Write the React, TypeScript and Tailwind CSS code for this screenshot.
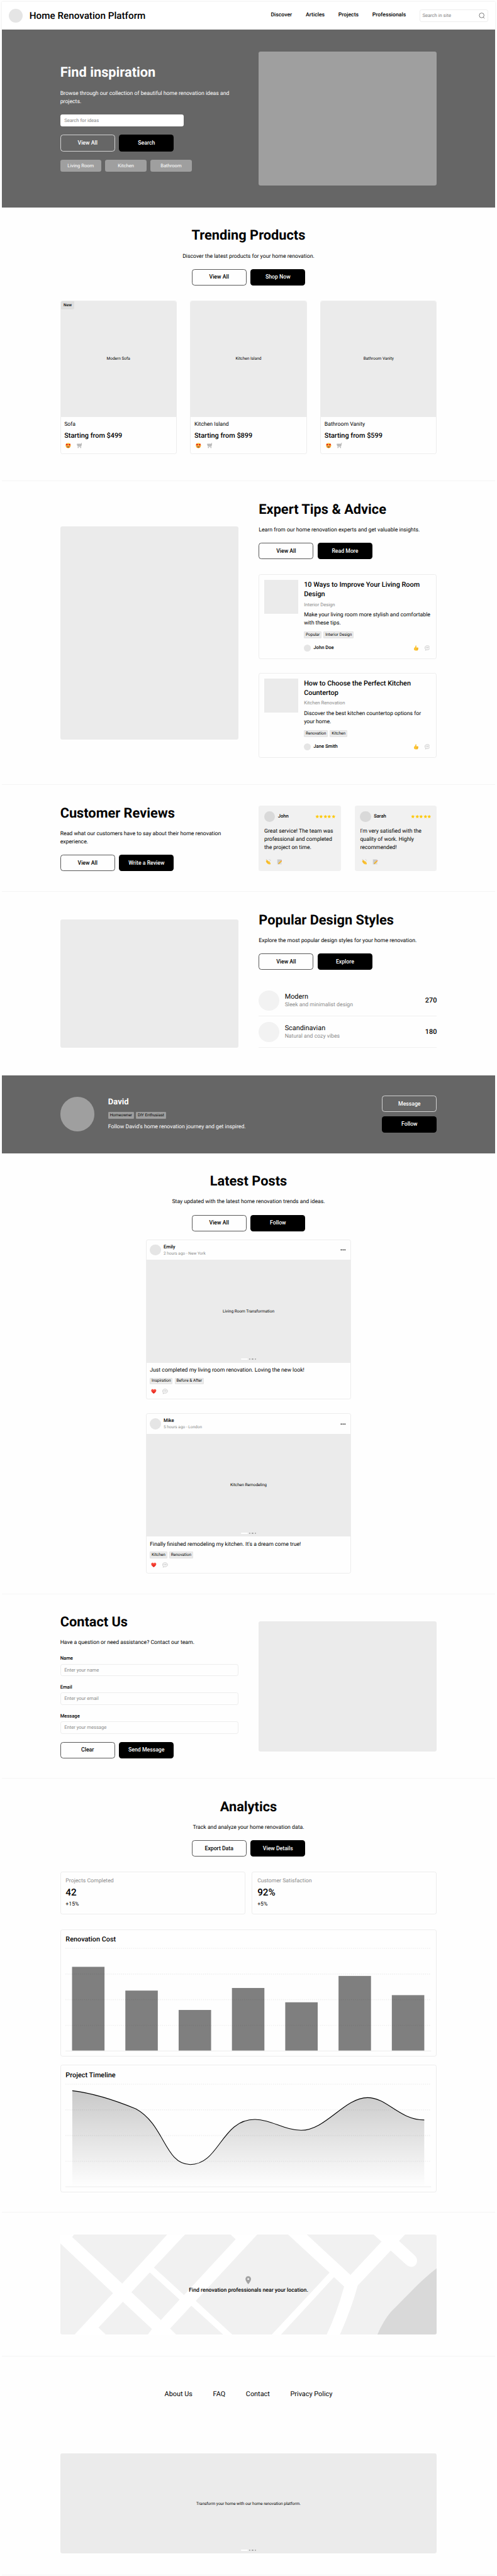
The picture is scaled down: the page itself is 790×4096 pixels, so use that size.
import type { ReactNode } from "react";

const t12 = "text-[6.53px] leading-4";
const t14 = "text-[7.62px] leading-5";
const t16 = "text-[8.71px] leading-6";
const t20 = "text-[10.88px] leading-7";

function Heart() {
  return (
    <svg viewBox="0 0 16 16" className="size-4">
      <defs>
        <linearGradient id="heart" x1="0" y1="0" x2="0" y2="1">
          <stop offset="0" stopColor="#ff5a4d" />
          <stop offset="1" stopColor="#e0190f" />
        </linearGradient>
      </defs>
      <path
        d="M8 14.8C3.5 11.8.6 9 .6 5.6.6 3.2 2.3 1.5 4.4 1.5 6 1.5 7.300 2.400 8 3.900 8.700 2.400 10 1.500 11.600 1.500c2.100 0 3.800 1.700 3.800 4.100 0 3.400-2.900 6.200-7.400 9.200Z"
        fill="url(#heart)"
      />
    </svg>
  );
}

function HeartEyes() {
  return (
    <svg viewBox="0 0 16 16" className="size-4">
      <defs>
        <linearGradient id="face" x1="0" y1="0" x2="0" y2="1">
          <stop offset="0" stopColor="#ffdf4f" />
          <stop offset="1" stopColor="#f0921c" />
        </linearGradient>
      </defs>
      <circle cx="8" cy="8" r="7.6" fill="url(#face)" />
      <path d="M4.400 9.800h7.200c0 2.400-1.400 3.800-3.600 3.800s-3.600-1.400-3.600-3.800Z" fill="#8a4a10" />
      <path d="M5 9.900h6v1.200H5z" fill="#fff" />
      <path d="M4 8.200C2 6.900 1 5.600 1.300 4.200c.4-1.500 2.400-1.700 3-.3 1-1 2.800-.4 2.800 1.200 0 1.300-1.200 2.300-3.100 3.100Z" fill="#e8231a" />
      <path d="M12 8.200c2-1.300 3-2.600 2.700-4-.4-1.500-2.400-1.700-3-.3-1-1-2.800-.4-2.800 1.200 0 1.300 1.200 2.300 3.100 3.100Z" fill="#e8231a" />
    </svg>
  );
}

function Cart() {
  return (
    <svg viewBox="0 0 16 16" className="size-4" fill="none" stroke="#8d8d8d">
      <path d="M15.600 1h-1.500L12 11.500H2.800" strokeWidth="1" />
      <path d="M1 3.500h12.300l-1 6H2.400z" fill="#e3e3e3" strokeWidth=".8" />
      <path d="M1.500 5.500h11.600M2 7.500h10.800M4 3.500l.8 6M7 3.500v6M10 3.500l-.4 6" strokeWidth=".6" />
      <circle cx="4" cy="14.200" r="1.100" fill="#555" stroke="none" />
      <circle cx="11.500" cy="14.200" r="1.100" fill="#555" stroke="none" />
    </svg>
  );
}

function Thumb() {
  return (
    <svg viewBox="0 0 16 16" className="size-4">
      <path
        d="M6.800.6c1.500-.5 2.300.7 2.200 2.300L8.700 6.500h4.200c2 0 2.200 2 1.200 2.600.9.700.6 2-.2 2.300.5.800.1 1.900-.7 2.100.2 1.100-.6 1.900-1.700 1.900H6.600c-2.800 0-4.900-1.500-4.900-4.300 0-2.500 1.500-3.600 2.700-4.900C5.700 4.800 6.300 3 6.800.6Z"
        fill="#fcc434"
      />
      <path d="M9.500 9.200h4.600M9.500 11.400h4.300M9.500 13.500h3.600" stroke="#d98e14" strokeWidth=".7" fill="none" />
    </svg>
  );
}

function Speech() {
  return (
    <svg viewBox="0 0 16 16" className="size-4">
      <path
        d="M8 1.200c4.200 0 7.500 2.700 7.500 6.200S12.200 13.500 8 13.500c-.8 0-1.600-.1-2.300-.3-1 1-2.300 1.600-4 1.600.9-.9 1.300-1.800 1.300-2.800C1.400 10.900.5 9.300.5 7.400.5 3.900 3.800 1.200 8 1.200Z"
        fill="#f4f4f4"
        stroke="#ababab"
        strokeWidth=".9"
      />
      <g fill="#777">
        <circle cx="5" cy="7" r=".8" />
        <circle cx="8" cy="7" r=".8" />
        <circle cx="11" cy="7" r=".8" />
      </g>
    </svg>
  );
}

function Clap() {
  return (
    <svg viewBox="0 0 16 16" className="size-4">
      <path
        d="M1.300 6.700c-.5-1 .6-1.700 1.300-1L1.900 4c-.2-1 1-1.500 1.600-.7l.6.6c.1-1.200 1.200-1.300 1.800-.5l4 4.200c.2-1.400 1.500-2 2-.8.6 1.500 1.300 3 2.600 4.700.8 1.300.8 2.200.2 3-1 1.200-2.600 1.300-4.500.8C6.800 14.600 4 12 1.300 6.700Z"
        fill="#fcc434"
      />
      <path d="M3.200 5.500l4.600 5M4.600 4.400l5 5.300M3 8.500l3.600 3.800" stroke="#dc951c" strokeWidth=".7" fill="none" />
      <path d="M.8 1.500l.8.8M3.300.5v1.300M11 .8v1.300M14.500 1.500l-.9 1M14 4.500h1.400" stroke="#777" strokeWidth=".8" />
    </svg>
  );
}

function Memo() {
  return (
    <svg viewBox="0 0 16 16" className="size-4">
      <path d="M1 .5h13v15H1z" fill="#dadada" />
      <path d="M2.500 3h10M2.500 5.500h10M2.500 8h8M2.500 10.500h5" stroke="#a5a5a5" strokeWidth=".8" />
      <path d="M4.400 14.800l.9-3.600 7-7 2.500 2.400-7 7z" fill="#f5b62a" />
      <path d="M12.300 4.200l1.300-1.100c.9-.4 2.200.8 1.900 1.900l-.7 1.600z" fill="#e87f78" />
      <path d="M4.400 14.800l.5-1.800 1.300 1.200z" fill="#444" />
    </svg>
  );
}

function IconCell({ children }: { children: ReactNode }) {
  return <span className="flex size-6 items-center justify-center">{children}</span>;
}

function Outline({ children, light = false }: { children: ReactNode; light?: boolean }) {
  return (
    <button
      className={`flex h-12 w-40 items-center justify-center rounded-[4.4px] border text-[8.71px] font-medium ${
        light ? "border-white/70 text-white" : "border-black/65 text-black"
      }`}
    >
      {children}
    </button>
  );
}

function Solid({ children }: { children: ReactNode }) {
  return (
    <button className="flex h-12 w-40 items-center justify-center rounded-[4.4px] bg-black text-[8.71px] font-medium text-white">
      {children}
    </button>
  );
}

function Intro({
  title,
  text,
  secondary,
  primary,
  center = false,
}: {
  title: string;
  text: string;
  secondary: string;
  primary: string;
  center?: boolean;
}) {
  return (
    <div className={`flex flex-col gap-6 ${center ? "items-center text-center" : ""}`}>
      <h2 className="text-[21.77px] leading-12 font-bold">{title}</h2>
      <p className={t16}>{text}</p>
      <div className="flex gap-3">
        <Outline>{secondary}</Outline>
        <Solid>{primary}</Solid>
      </div>
    </div>
  );
}

function Section({ children, pad = "py-15" }: { children: ReactNode; pad?: string }) {
  return (
    <section className={`${pad} bg-[#fefefe] shadow-[inset_0_-1px_0_#f5f5f5]`}>
      <div className="mx-auto w-275">{children}</div>
    </section>
  );
}

function Tag({ children, dark = false }: { children: ReactNode; dark?: boolean }) {
  return (
    <span
      className={`flex h-5 items-center rounded-[1px] border px-[1.8px] text-[6.53px] whitespace-nowrap ${
        dark ? "border-[#999] bg-[#9f9f9f]" : "border-[#e3e3e3] bg-[#ebebeb]"
      }`}
    >
      {children}
    </span>
  );
}

function Dots() {
  return (
    <div className="flex h-1 items-center justify-center gap-1">
      <span className="h-1 w-5 rounded-full bg-white" />
      <span className="size-1 rounded-full bg-[#a3a3a3]" />
      <span className="size-1 rounded-full bg-[#a3a3a3]" />
      <span className="size-1 rounded-full bg-[#a3a3a3]" />
    </div>
  );
}

const card = "rounded-[3.3px] border border-[#ededed] overflow-hidden";

const products = [
  { label: "Modern Sofa", name: "Sofa", price: "$499", isNew: true },
  { label: "Kitchen Island", name: "Kitchen Island", price: "$899", isNew: false },
  { label: "Bathroom Vanity", name: "Bathroom Vanity", price: "$599", isNew: false },
];

const articles = [
  {
    title: "10 Ways to Improve Your Living Room Design",
    topic: "Interior Design",
    text: "Make your living room more stylish and comfortable with these tips.",
    tags: ["Popular", "Interior Design"],
    author: "John Doe",
  },
  {
    title: "How to Choose the Perfect Kitchen Countertop",
    topic: "Kitchen Renovation",
    text: "Discover the best kitchen countertop options for your home.",
    tags: ["Renovation", "Kitchen"],
    author: "Jane Smith",
  },
];

const reviews = [
  { name: "John", text: "Great service! The team was professional and completed the project on time." },
  { name: "Sarah", text: "I'm very satisfied with the quality of work. Highly recommended!" },
];

const designStyles = [
  { name: "Modern", text: "Sleek and minimalist design", count: 270 },
  { name: "Scandinavian", text: "Natural and cozy vibes", count: 180 },
];

const posts = [
  {
    name: "Emily",
    meta: "2 hours ago - New York",
    label: "Living Room Transformation",
    text: "Just completed my living room renovation. Loving the new look!",
    tags: ["Inspiration", "Before & After"],
  },
  {
    name: "Mike",
    meta: "5 hours ago - London",
    label: "Kitchen Remodeling",
    text: "Finally finished remodeling my kitchen. It's a dream come true!",
    tags: ["Kitchen", "Renovation"],
  },
];

const stats = [
  { label: "Projects Completed", value: "42", delta: "+15%" },
  { label: "Customer Satisfaction", value: "92%", delta: "+5%" },
];

const bars = [246, 176.6, 120, 184.2, 142.4, 219.4, 163.3];

const curve =
  "M20 19C80 26 150 49 206 72C290 118 290 234.600 364.500 234.600C450 234.600 455 103 553.400 103C600 103 640 134.600 688.600 134.600C760 134.600 815 39.200 882.200 39.200C940 39.200 975 104.500 1048 104.500";

function Grid() {
  return (
    <>
      {[0, 75, 150, 225].map((y) => (
        <path key={y} d={`M0 ${y}H1068`} stroke="#000" strokeOpacity=".055" strokeWidth="3" strokeDasharray="3 3" />
      ))}
      <path d="M0 300H1068" stroke="#f2f2f2" strokeWidth="3" />
    </>
  );
}

function ChartCard({ title, children }: { title: string; children: ReactNode }) {
  return (
    <div className={`${card} flex h-93 flex-col gap-3 px-[calc(var(--spacing)*4-1px)] pt-[calc(var(--spacing)*4-1px)]`}>
      <h3 className={`${t20} font-medium`}>{title}</h3>
      <svg viewBox="0 0 1068 300" className="block h-75 w-full overflow-visible">
        {children}
      </svg>
    </div>
  );
}

export default function App() {
  return (
    <div className="h-[4096px] w-full overflow-hidden bg-[#fefefe] px-[3.26px] pt-1.5 font-[Roboto,sans-serif] text-black [--spacing:2.177px] [text-rendering:geometricPrecision]">
      <header className="flex h-20 items-center bg-white px-5 shadow-[0_0_3px_rgba(0,0,0,0.1)]">
        <span className="size-10 rounded-full bg-[#e5e5e5]" />
        <span className="ml-5 text-[15.24px] font-medium whitespace-nowrap">Home Renovation Platform</span>
        <nav className="ml-auto flex gap-10 text-[8.71px] font-medium">
          <a>Discover</a>
          <a>Articles</a>
          <a>Projects</a>
          <a>Professionals</a>
        </nav>
        <div className="ml-10 flex h-9 w-50 items-center justify-between rounded-[3.3px] border border-[#ededed] pr-[3.800px] pl-[3.400px]">
          <span className="text-[7.62px] text-[#7f7f7f]">Search in site</span>
          <svg viewBox="0 0 18 18" className="size-4.5" fill="none" stroke="#444" strokeWidth="1.300">
            <circle cx="8.500" cy="8.200" r="7" />
            <path d="M13.200 13.500l3.500 3.700" />
          </svg>
        </div>
      </header>

      <section className="relative bg-[#666] py-16 text-white">
        <div className="mx-auto grid w-275 grid-cols-2 items-center gap-15">
          <div className="flex flex-col gap-6">
            <h1 className="text-[21.77px] leading-12 font-bold">Find inspiration</h1>
            <p className={t16}>Browse through our collection of beautiful home renovation ideas and projects.</p>
            <div className="flex h-9 w-90 items-center rounded-[3.3px] bg-white px-3 text-[7.62px] text-[#7f7f7f]">
              Search for ideas
            </div>
            <div className="flex gap-3">
              <Outline light>View All</Outline>
              <Solid>Search</Solid>
            </div>
            <div className="flex gap-3">
              {["Living Room", "Kitchen", "Bathroom"].map((t) => (
                <span
                  key={t}
                  className="flex h-9 w-30 items-center justify-center rounded-[3.3px] bg-[#9f9f9f] text-[7.62px]"
                >
                  {t}
                </span>
              ))}
            </div>
          </div>
          <div className="h-98 rounded-[3.3px] bg-[#9f9f9f]" />
        </div>
      </section>

      <Section pad="pt-15 pb-20">
        <Intro center title="Trending Products" text="Discover the latest products for your home renovation." secondary="View All" primary="Shop Now" />
        <div className="mt-11 grid grid-cols-3 gap-10">
          {products.map((p) => (
            <div key={p.name} className={`${card} h-112`}>
              <div className="relative flex h-[calc(var(--spacing)*85-1px)] items-center justify-center bg-[#ebebeb]">
                {p.isNew && (
                  <span className={`${t12} absolute top-0 left-0 flex h-6 w-10 items-center justify-center rounded-br-[3px] bg-[#dedede] font-medium`}>
                    New
                  </span>
                )}
                <span className={t12}>{p.label}</span>
              </div>
              <div className="flex flex-col gap-1 px-[calc(var(--spacing)*3-1px)] pt-3">
                <span className={t16}>{p.name}</span>
                <span className={`${t20} font-medium`}>Starting from {p.price}</span>
                <div className="flex gap-2">
                  <IconCell>
                    <HeartEyes />
                  </IconCell>
                  <IconCell>
                    <Cart />
                  </IconCell>
                </div>
              </div>
            </div>
          ))}
        </div>
      </Section>

      <Section>
        <div className="grid grid-cols-2 items-center gap-15">
          <div className="h-156 rounded-[3.3px] bg-[#ebebeb]" />
          <div>
            <Intro title="Expert Tips & Advice" text="Learn from our home renovation experts and get valuable insights." secondary="View All" primary="Read More" />
            <div className="mt-11 mb-5 flex flex-col gap-10">
              {articles.map((a) => (
                <article key={a.title} className={`${card} flex h-62 gap-4 p-[calc(var(--spacing)*4-1px)]`}>
                  <div className="size-25 shrink-0 bg-[#ebebeb]" />
                  <div className="flex flex-1 flex-col gap-2">
                    <h3 className={`${t20} font-medium`}>{a.title}</h3>
                    <span className={`${t14} text-[#8a8a8a]`}>{a.topic}</span>
                    <p className={t16}>{a.text}</p>
                    <div className="flex h-7 items-center gap-1.5">
                      {a.tags.map((t) => (
                        <Tag key={t}>{t}</Tag>
                      ))}
                    </div>
                    <div className="flex h-8 items-center">
                      <span className="size-5 rounded-full bg-[#e5e5e5]" />
                      <span className={`${t14} ml-2 font-medium`}>{a.author}</span>
                      <div className="ml-auto flex gap-2">
                        <IconCell>
                          <Thumb />
                        </IconCell>
                        <IconCell>
                          <Speech />
                        </IconCell>
                      </div>
                    </div>
                  </div>
                </article>
              ))}
            </div>
          </div>
        </div>
      </Section>

      <Section>
        <div className="grid grid-cols-2 gap-15">
          <Intro title="Customer Reviews" text="Read what our customers have to say about their home renovation experience." secondary="View All" primary="Write a Review" />
          <div className="grid grid-cols-2 gap-10">
            {reviews.map((r) => (
              <div key={r.name} className="flex h-48 flex-col gap-4 rounded-[3.3px] bg-[#f1f1f1] p-4">
                <div className="flex items-center">
                  <span className="size-8 rounded-full bg-[#d9d9d9]" />
                  <span className={`${t14} ml-2 font-medium`}>{r.name}</span>
                  <div className="ml-auto flex">
                    {[0, 1, 2, 3, 4].map((i) => (
                      <svg key={i} viewBox="0 0 24 24" className="size-3" fill="#fec806">
                        <path d="M12 1.500l3.200 7 7.600.8-5.700 5.100 1.600 7.600L12 18.200 5.300 22l1.600-7.600L1.200 9.300l7.600-.8z" />
                      </svg>
                    ))}
                  </div>
                </div>
                <p className={`${t16} -mr-2`}>{r.text}</p>
                <div className="flex gap-2">
                  <IconCell>
                    <Clap />
                  </IconCell>
                  <IconCell>
                    <Memo />
                  </IconCell>
                </div>
              </div>
            ))}
          </div>
        </div>
      </Section>

      <Section>
        <div className="grid grid-cols-2 items-center gap-15">
          <div className="h-94 rounded-[3.3px] bg-[#ebebeb]" />
          <div>
            <Intro title="Popular Design Styles" text="Explore the most popular design styles for your home renovation." secondary="View All" primary="Explore" />
            <div className="mt-11 mb-5">
              {designStyles.map((s) => (
                <div key={s.name} className="flex h-23 items-center gap-4 shadow-[inset_0_-1px_0_#f1f1f1]">
                  <span className="size-15 rounded-full bg-[#f2f2f2]" />
                  <div className="flex flex-col">
                    <span className={t20}>{s.name}</span>
                    <span className={`${t16} text-[#8a8a8a]`}>{s.text}</span>
                  </div>
                  <span className={`${t20} ml-auto font-medium`}>{s.count}</span>
                </div>
              ))}
            </div>
          </div>
        </div>
      </Section>

      <section className="bg-[#666] py-15 text-white">
        <div className="mx-auto flex w-275 items-center">
          <span className="size-25 rounded-full bg-[#9f9f9f]" />
          <div className="ml-10 flex flex-col gap-2">
            <h2 className="text-[13.06px] leading-8 font-bold">David</h2>
            <div className="flex h-7 items-center gap-1.5 text-black">
              <Tag dark>Homeowner</Tag>
              <Tag dark>DIY Enthusiast</Tag>
            </div>
            <p className={t16}>Follow David's home renovation journey and get inspired.</p>
          </div>
          <div className="ml-auto flex flex-col gap-3">
            <Outline light>Message</Outline>
            <Solid>Follow</Solid>
          </div>
        </div>
      </section>

      <Section>
        <Intro center title="Latest Posts" text="Stay updated with the latest home renovation trends and ideas." secondary="View All" primary="Follow" />
        <div className="mx-auto mt-6 flex w-150 flex-col gap-10">
          {posts.map((p) => (
            <article key={p.name} className={`${card} flex h-117 flex-col`}>
              <div className="flex h-[calc(var(--spacing)*15-1px)] items-center px-[calc(var(--spacing)*3-1px)]">
                <span className="size-8 rounded-full bg-[#e5e5e5]" />
                <div className="ml-2 flex flex-col">
                  <span className={`${t14} font-medium`}>{p.name}</span>
                  <span className={`${t12} text-[#8a8a8a]`}>{p.meta}</span>
                </div>
                <span className="ml-auto flex size-6 items-center justify-center">
                  <svg viewBox="0 0 16 16" className="size-4">
                    <circle cx="2.600" cy="8" r="1.700" />
                    <circle cx="8" cy="8" r="1.700" />
                    <circle cx="13.400" cy="8" r="1.700" />
                  </svg>
                </span>
              </div>
              <div className="flex h-75 shrink-0 flex-col items-center bg-[#ebebeb] pt-3 pb-2">
                <span className={`${t12} my-auto`}>{p.label}</span>
                <Dots />
              </div>
              <div className="flex flex-col gap-1 px-[calc(var(--spacing)*3-1px)] pt-3">
                <p className={t16}>{p.text}</p>
                <div className="flex h-7 items-center gap-1.5">
                  {p.tags.map((t) => (
                    <Tag key={t}>{t}</Tag>
                  ))}
                </div>
                <div className="flex gap-2">
                  <IconCell>
                    <Heart />
                  </IconCell>
                  <IconCell>
                    <Speech />
                  </IconCell>
                </div>
              </div>
            </article>
          ))}
        </div>
      </Section>

      <Section>
        <div className="grid grid-cols-2 items-center gap-15">
          <div className="flex flex-col gap-6">
            <h2 className="text-[21.77px] leading-12 font-bold">Contact Us</h2>
            <p className={t16}>Have a question or need assistance? Contact our team.</p>
            {["Name", "Email", "Message"].map((f) => (
              <div key={f} className="flex flex-col gap-1">
                <span className={`${t14} font-medium`}>{f}</span>
                <div className="flex h-9 items-center rounded-[3.3px] border border-[#ededed] px-[calc(var(--spacing)*3-1px)] text-[7.62px] text-[#8a8a8a]">
                  Enter your {f.toLowerCase()}
                </div>
              </div>
            ))}
            <div className="flex gap-3">
              <Outline>Clear</Outline>
              <Solid>Send Message</Solid>
            </div>
          </div>
          <div className="h-95 rounded-[3.3px] bg-[#ebebeb]" />
        </div>
      </Section>

      <Section>
        <Intro center title="Analytics" text="Track and analyze your home renovation data." secondary="Export Data" primary="View Details" />
        <div className="mt-11 grid grid-cols-2 gap-5">
          {stats.map((s) => (
            <div key={s.label} className={`${card} flex h-31 flex-col gap-1 p-[calc(var(--spacing)*4-1px)]`}>
              <span className={`${t16} text-[#8a8a8a]`}>{s.label}</span>
              <span className="text-[15.24px] leading-9 font-medium">{s.value}</span>
              <span className={t16}>{s.delta}</span>
            </div>
          ))}
        </div>
        <div className="mt-11 flex flex-col gap-6">
          <ChartCard title="Renovation Cost">
            {bars.map((h, i) => (
              <rect key={i} x={19.3 + i * 155.67} y={300 - h} width="94.800" height={h} fill="#7f7f7f" />
            ))}
            <Grid />
          </ChartCard>
          <ChartCard title="Project Timeline">
            <defs>
              <linearGradient id="area" gradientUnits="userSpaceOnUse" x1="0" y1="19" x2="0" y2="300">
                <stop offset="0" stopColor="#000" stopOpacity=".21" />
                <stop offset="1" stopColor="#000" stopOpacity="0" />
              </linearGradient>
            </defs>
            <Grid />
            <path d={`${curve}V300H20Z`} fill="url(#area)" />
            <path d={curve} fill="none" stroke="#000" strokeWidth="2" />
          </ChartCard>
        </div>
      </Section>

      <Section pad="py-16">
        <div className="relative h-73 overflow-hidden rounded-[3.3px]">
          <svg viewBox="190 75 1188 438" preserveAspectRatio="none" className="block h-full w-full bg-white">
            <g fill="#f1f1f1">
              <path d="M233 75H527L385 290L227 86Z" />
              <path d="M190 114L356 332L235 513H190Z" />
              <path d="M583 75H727L743 96L580 340L485 220Z" />
              <path d="M472 241L566 360L507 450L414 328Z" />
              <path d="M387 370L479 489L466 513H333L310 483Z" />
              <path d="M603 387L703 513H555L536 487Z" />
              <path d="M811 75H908L1039 242L857 513H732L617 366Z" />
              <path d="M967 75H1178L1203 106L1105 252Z" />
              <path d="M1053 262L1085 303Q1062 420 1030 513H886Z" />
              <path d="M1277 75H1378V513H1072Q1108 400 1128 298L1232 145L1280 206C1297 228 1315 213 1315 190Q1315 176 1307 166L1258 103Z" />
            </g>
            <path d="M1378 222C1330 272 1290 335 1232 415Q1208 455 1190 513H1378Z" fill="#d9d9d9" />
          </svg>
          <div className="absolute inset-0 flex flex-col items-center justify-center">
            <svg viewBox="0 0 24 24" className="my-1 size-7" fill="#a3a3a3">
              <path d="M12 2C8.130 2 5 5.130 5 9c0 5.250 7 13 7 13s7-7.750 7-13c0-3.870-3.130-7-7-7zm0 9.500a2.500 2.500 0 0 1 0-5 2.500 2.500 0 0 1 0 5z" />
            </svg>
            <span className={`${t16} font-medium`}>Find renovation professionals near your location.</span>
          </div>
        </div>
      </Section>

      <footer className="flex h-55 items-center justify-center gap-15 text-[10.88px]">
        <a>About Us</a>
        <a>FAQ</a>
        <a>Contact</a>
        <a>Privacy Policy</a>
      </footer>

      <Section pad="py-16">
        <div className="flex h-73 flex-col items-center rounded-[3.3px] bg-[#ebebeb] pt-3 pb-2">
          <span className={`${t12} my-auto`}>Transform your home with our home renovation platform.</span>
          <Dots />
        </div>
      </Section>
    </div>
  );
}
